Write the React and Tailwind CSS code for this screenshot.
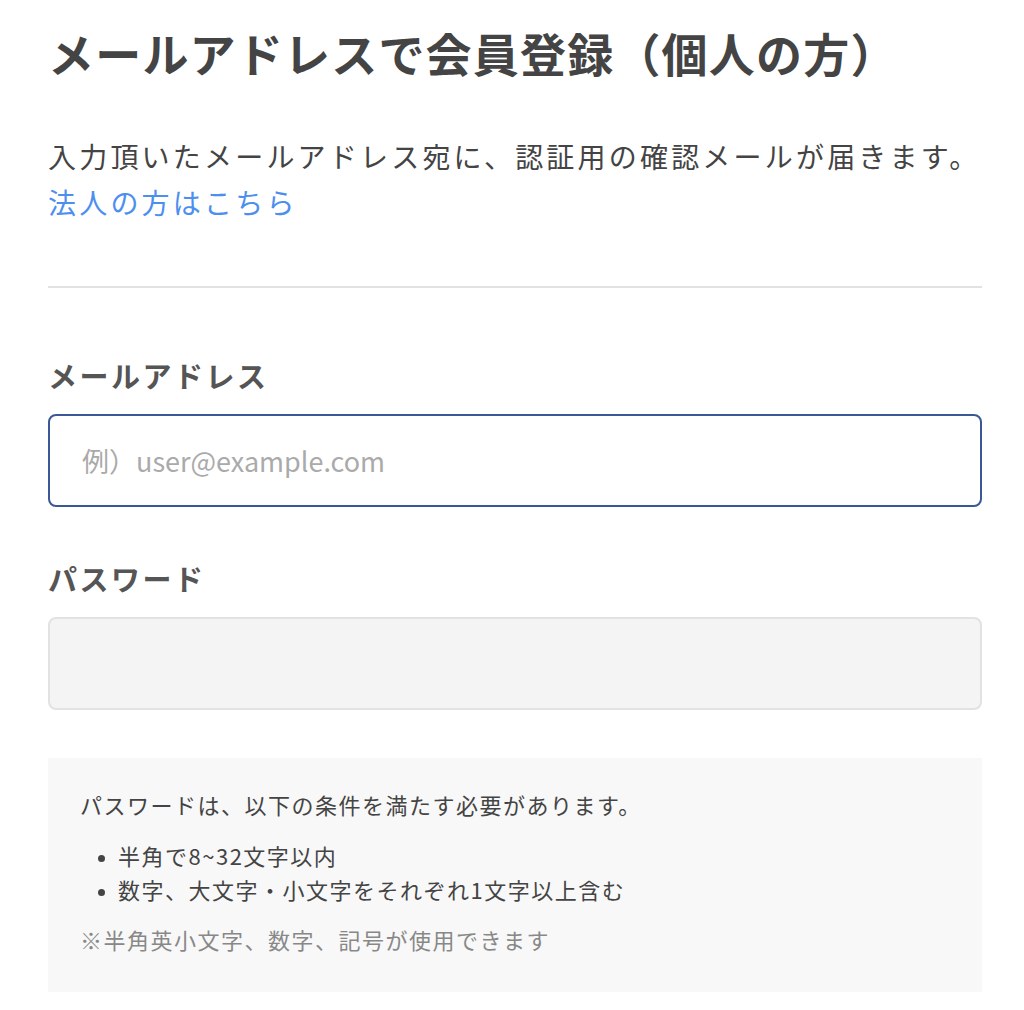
import { useState } from 'react';

const font = { fontFamily: '"Noto Sans CJK JP", "Noto Sans", sans-serif' };

// 会員登録フォーム（個人）
function SignupForm() {
  const [email, setEmail] = useState('');
  const [password, setPassword] = useState('');

  return (
    <div className="min-h-screen bg-white pl-12 pr-[42px] pt-[20px]" style={font}>
      <h1 className="whitespace-nowrap text-[46px] font-bold leading-[64px] tracking-[1.2px] text-[#444]">
        メールアドレスで会員登録（個人の方）
      </h1>

      <p className="mt-[49px] text-[28px] leading-[46px] tracking-[3.2px] text-[#444]">
        <span className="whitespace-nowrap">入力頂いたメールアドレス宛に、認証用の確認メールが届きます。</span>
        <br />
        <a href="#" className="text-[#4d8fef]">法人の方はこちら</a>
      </p>

      <hr className="mt-[61px] border-t-2 border-[#e2e2e2]" />

      <label className="mt-[67px] block text-[29px] font-bold leading-[40px] tracking-[2.5px] text-[#555]">
        メールアドレス
      </label>
      <input
        type="email"
        value={email}
        onChange={(e) => setEmail(e.target.value)}
        placeholder="例）user@example.com"
        className="mt-[19px] block h-[93px] w-full rounded-lg border-2 border-[#3b5795] px-8 text-[27px] text-[#333] outline-none placeholder:text-[#aaa]"
      />

      <label className="mt-[51px] block text-[29px] font-bold leading-[40px] tracking-[2.5px] text-[#555]">
        パスワード
      </label>
      <input
        type="password"
        value={password}
        onChange={(e) => setPassword(e.target.value)}
        className="mt-[19px] block h-[93px] w-full rounded-lg border-2 border-[#e2e2e2] bg-[#f4f4f4] px-8 text-[27px] outline-none"
      />

      <div className="mt-[48px] bg-[#f8f8f8] px-8 pt-[29px] pb-[36px] text-[22px] tracking-[1.5px] text-[#444]">
        <p className="leading-[34px]">パスワードは、以下の条件を満たす必要があります。</p>
        <ul className="mt-[17px] list-disc pl-[38px] leading-[34px] marker:text-[17px]">
          <li>半角で8~32文字以内</li>
          <li>数字、大文字・小文字をそれぞれ1文字以上含む</li>
        </ul>
        <p className="mt-[16px] leading-[34px] text-[#888]">※半角英小文字、数字、記号が使用できます</p>
      </div>
    </div>
  );
}

export default function App() {
  return <SignupForm />;
}
